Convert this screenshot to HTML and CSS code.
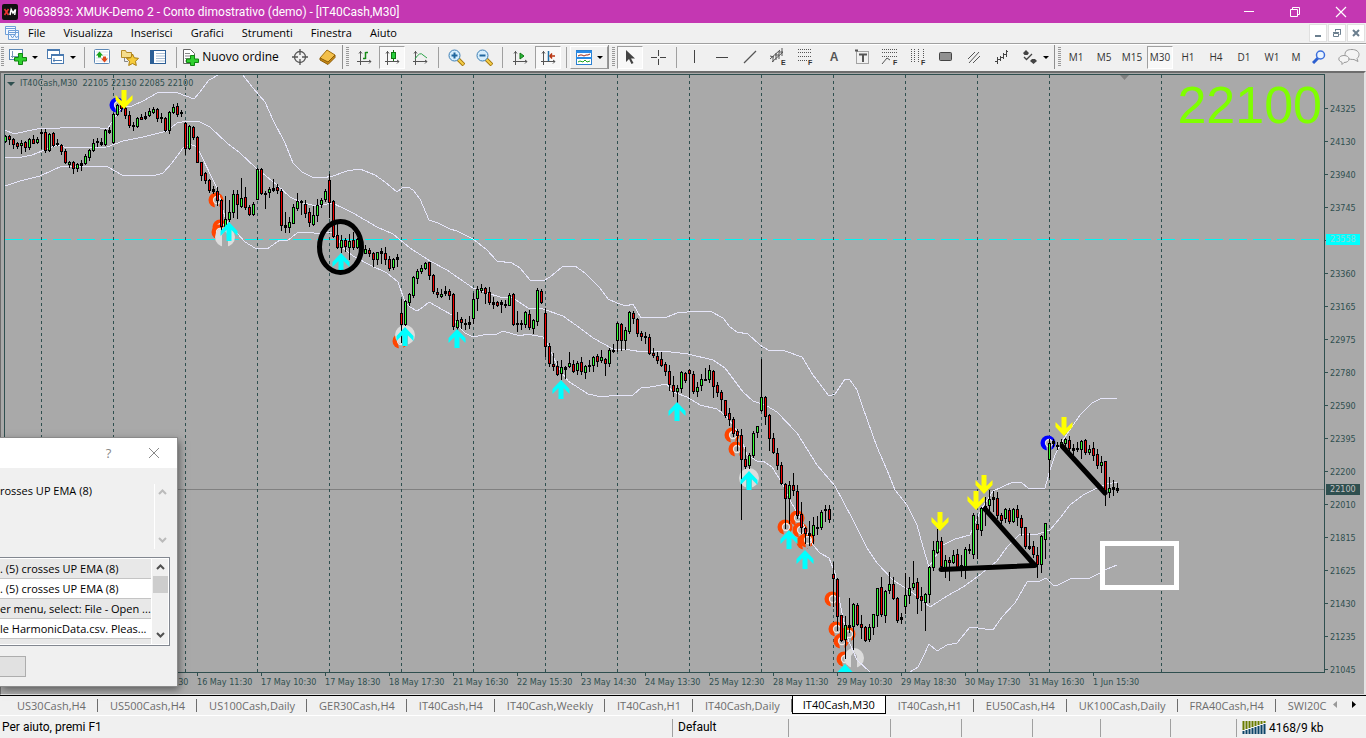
FILE: index.html
```html
<!DOCTYPE html>
<html lang="it">
<head>
<meta charset="utf-8">
<title>9063893: XMUK-Demo 2 - Conto dimostrativo (demo) - [IT40Cash,M30]</title>
<link rel="stylesheet" href="styles.css">
</head>
<body>
<header class="titlebar">
  <svg class="app-logo" width="16" height="16" viewBox="0 0 16 16"><rect width="16" height="16" rx="2" fill="#111"/><path d="M2.500 5l4 6M6.500 5l-4 6" stroke="#e33" stroke-width="1.600"/><path d="M8 11l1.200-5.500 1.800 3.500 2.500-3.500-.8 5.500" fill="none" stroke="#fff" stroke-width="1.500"/></svg>
  <h1 class="title">9063893: XMUK-Demo 2 - Conto dimostrativo (demo) - [IT40Cash,M30]</h1>
  <div class="win-controls">
    <button class="win-btn" aria-label="Riduci"><svg width="12" height="12"><path d="M1 5.500h10" stroke="#fff"/></svg></button>
    <button class="win-btn" aria-label="Ripristina"><svg width="12" height="12" fill="none" stroke="#fff"><path d="M1.500 3.500h7v7h-7zM3.500 3.500v-2h7v7h-2"/></svg></button>
    <button class="win-btn" aria-label="Chiudi"><svg width="12" height="12"><path d="M1 1l10 10M11 1L1 11" stroke="#fff" stroke-width="1.200"/></svg></button>
  </div>
</header>

<nav class="menubar">
  <svg class="menu-icon" width="14" height="14" viewBox="0 0 14 14" fill="#f4f9ff" stroke="#6f9fd8"><path d="M.5.5h10v8h-10zM.5 2.500h10M3.500 4.500h10v9h-10zM3.500 6.500h10"/><path d="M5.500 9l2 3 2-3 2 3 1-2" fill="none"/></svg>
  <button class="menu">File</button><button class="menu">Visualizza</button><button class="menu">Inserisci</button><button class="menu">Grafici</button><button class="menu">Strumenti</button><button class="menu">Finestra</button><button class="menu">Aiuto</button>
  <div class="mdi-controls">
    <button class="mdi-btn" aria-label="Riduci grafico"><svg width="10" height="10"><path d="M2 8h6" stroke="#6b7f8f" stroke-width="2"/></svg></button>
    <button class="mdi-btn" aria-label="Ripristina grafico"><svg width="10" height="10" fill="none" stroke="#6b7f8f"><path d="M1.500 5.500h5v3h-5zM1 4.500h6M3.500 3.500v-2h5v5h-1M3 1.500h6"/></svg></button>
    <button class="mdi-btn" aria-label="Chiudi grafico"><svg width="10" height="10"><path d="M2 2l6 6M8 2L2 8" stroke="#6b7f8f" stroke-width="2"/></svg></button>
  </div>
</nav>

<div class="toolbars">
  <div class="toolbar">
    <span class="grip"></span>
    <button class="tool drop" aria-label="Nuovo grafico"><svg width="18" height="16" fill="none"><rect x=".5" y=".5" width="13" height="10" fill="#fff" stroke="#5b87b5"/><path d="M3.500 2v7M2 7.500h9M9 5.500l2 2" stroke="#7898b8"/><path d="M9.500 4.500h4v4h4v3.500h-4v3.500h-4V12h-4V8.500h4z" fill="#2fd02f" stroke="#118511"/></svg><i class="caret"></i></button>
    <button class="tool drop" aria-label="Profili"><svg width="18" height="16" fill="#fff" stroke="#4a7ab0"><rect x=".5" y=".5" width="12" height="9"/><path d="M.5 1.500h12"/><rect x="4.500" y="5.500" width="12" height="9"/><path d="M4.500 6.500h12M7 9v4M6 11.500h9" fill="none"/></svg><i class="caret"></i></button>
    <span class="sep"></span>
    <button class="tool" aria-label="Market watch"><svg width="16" height="16"><rect x=".5" y=".5" width="15" height="14" rx="1" fill="#fff" stroke="#5b87b5"/><path d="M2 3h12M2 6h12M2 9h12M2 12h12" stroke="#d5dfe9"/><path d="M5.500 2.500L9 6.500H7v2H4v-2H2z" fill="#19a519"/><path d="M10.500 13.500L7 9.500h2v-2h3v2h2z" fill="#e04818"/></svg></button>
    <button class="tool" aria-label="Navigatore"><svg width="20" height="17"><path d="M1.500 1.500h4l1 2h5v5h-10z" fill="#f5dd8c" stroke="#b58b28"/><path d="M4.500 9v3.500H8" fill="none" stroke="#888"/><path d="M12.500 5l1.800 3.800 4.200.5-3 3 .8 4.200-3.800-2-3.800 2 .8-4.200-3-3 4.200-.5z" fill="#f6cc3c" stroke="#a97c10"/></svg></button>
    <button class="tool" aria-label="Terminale"><svg width="16" height="14"><rect x=".5" y=".5" width="15" height="13" fill="#fff" stroke="#2c5f96"/><rect x="1" y="1" width="3" height="12" fill="#2c5f96"/><path d="M6 3.500h9M6 6h9M6 8.500h9M6 11h9" stroke="#a8bdd3"/></svg></button>
    <span class="sep"></span>
    <button class="tool order"><svg width="17" height="17"><path d="M1.500.5h7l4 4v10h-11z" fill="#fff" stroke="#666"/><path d="M3 4.500h5M3 7h7M3 9.500h7M3 12h4" stroke="#888"/><path d="M8.500 6.500h4v3.500h4v3.500h-4v3h-4v-3h-4V10h4z" fill="#2fd02f" stroke="#118511"/></svg>Nuovo ordine</button>
    <button class="tool" aria-label="Opzioni"><svg width="16" height="16" fill="none" stroke="#555" stroke-width="1.300"><circle cx="8" cy="8" r="5.500"/><path d="M8 0v6M8 10v6M0 8h6M10 8h6"/></svg></button>
    <button class="tool" aria-label="MetaEditor"><svg width="18" height="16"><path d="M1 9L8 1l8 5-7 8z" fill="#f3c04a" stroke="#a06d0c"/><path d="M1 9l8 4 7-7v2.500L9 15.500 1 11z" fill="#c88914" stroke="#8d5d08"/></svg></button>
  </div>
  <div class="toolbar ruled">
    <span class="grip"></span>
    <button class="tool" aria-label="Barre"><svg width="15" height="15" fill="none" stroke="#555"><path d="M3.500 1v14M0 11.500h14M2 3.500l1.500-2 1.500 2M12 10l2 1.500-2 2"/><path d="M8.500 2v7M6 8.500h2.500M8.500 2.500H11" stroke="#178a17" stroke-width="1.500"/></svg></button>
    <button class="tool on" aria-label="Candele"><svg width="15" height="15" fill="none" stroke="#555"><path d="M2.500 1v14M0 11.500h14M1 3.500l1.500-2 1.500 2M12 10l2 1.500-2 2"/><path d="M8.500 0v11" stroke="#117711"/><rect x="6.500" y="2.500" width="4" height="6" fill="#27cf3c" stroke="#117711"/></svg></button>
    <button class="tool" aria-label="Linea"><svg width="15" height="15" fill="none" stroke="#555"><path d="M2.500 1v14M0 11.500h14M1 3.500l1.500-2 1.500 2M12 10l2 1.500-2 2"/><path d="M2 9q5-8 8-4l4 3" stroke="#2ca44a"/></svg></button>
    <span class="sep"></span>
    <button class="tool" aria-label="Ingrandisci"><svg width="17" height="17"><path d="M10 10l6 6" stroke="#a57910" stroke-width="4"/><path d="M10 10l5.500 5.500" stroke="#f6cf4a" stroke-width="2"/><circle cx="6.500" cy="6.500" r="5.500" fill="#d7eefc" stroke="#3d7fb5"/><path d="M3.500 6.500h6M6.500 3.500v6" stroke="#20679e" stroke-width="2"/></svg></button>
    <button class="tool" aria-label="Riduci zoom"><svg width="17" height="17"><path d="M10 10l6 6" stroke="#a57910" stroke-width="4"/><path d="M10 10l5.500 5.500" stroke="#f6cf4a" stroke-width="2"/><circle cx="6.500" cy="6.500" r="5.500" fill="#d7eefc" stroke="#3d7fb5"/><path d="M3.500 6.500h6" stroke="#20679e" stroke-width="2"/></svg></button>
    <span class="sep"></span>
    <button class="tool" aria-label="Scorrimento"><svg width="15" height="15" fill="none" stroke="#555"><path d="M2.500 1v14M0 11.500h14M1 3.500l1.500-2 1.500 2M12 10l2 1.500-2 2"/><path d="M7 3l4 3-4 3z" fill="#27b83c" stroke="#117711"/></svg></button>
    <button class="tool on" aria-label="Spostamento"><svg width="15" height="15" fill="none" stroke="#555"><path d="M2.500 1v14M0 11.500h14M1 3.500l1.500-2 1.500 2M12 10l2 1.500-2 2"/><path d="M7.500 1v10" stroke="#1f6fa8" stroke-width="1.500"/><path d="M14 6H9m2-2.500L9 6l2 2.500" stroke="#b8330f" stroke-width="1.500"/></svg></button>
    <span class="sep"></span>
    <button class="tool drop raised" aria-label="Modelli"><svg width="16" height="15"><rect x=".5" y=".5" width="15" height="14" fill="#fff" stroke="#2a7fd0"/><path d="M0 2h16M0 8h16" stroke="#2a8be6" stroke-width="2"/><path d="M2 6l2-1h2l2 1 2-1h2l2-1" fill="none" stroke="#9c2a18"/><path d="M2 12l2-1 3 1 2-2 2 2 3-1" fill="none" stroke="#22a722"/></svg><i class="caret"></i></button>
  </div>
  <div class="toolbar ruled">
    <span class="grip"></span>
    <button class="tool on" aria-label="Cursore"><svg width="12" height="16"><path d="M2 1v12l3-3 2.500 5 2-1L7 9.500h4z" fill="#444"/></svg></button>
    <button class="tool" aria-label="Mirino"><svg width="16" height="16"><path d="M8.500 1v6M8.500 10v6M1 8.500h6M10 8.500h6" stroke="#444"/></svg></button>
    <span class="sep"></span>
    <button class="tool" aria-label="Linea verticale"><svg width="16" height="16"><path d="M8.500 1v13" stroke="#444"/></svg></button>
    <button class="tool" aria-label="Linea orizzontale"><svg width="16" height="16"><path d="M2 8.500h12" stroke="#444"/></svg></button>
    <button class="tool" aria-label="Trendline"><svg width="16" height="16"><path d="M2 14L14 2" stroke="#555" stroke-width="1.200"/></svg></button>
    <button class="tool" aria-label="Canale equidistante"><svg width="18" height="18" fill="none" stroke="#555"><path d="M1 11L11 2M3 14l11-10M4 8v6M7 5v7M10 3v8M13 0v8M1 8l4 1M6 7l4 0M10 4l4 0"/><text class="glyph" x="12" y="17">E</text></svg></button>
    <button class="tool" aria-label="Fibonacci"><svg width="18" height="18"><path d="M1 1.500h14M1 4.500h14M1 8.500h14M1 12.500h9" stroke="#555" stroke-dasharray="1 1"/><text class="glyph" x="11" y="17">F</text></svg></button>
    <button class="tool letter" aria-label="Testo">A</button>
    <button class="tool" aria-label="Etichetta"><svg width="15" height="16" fill="none" stroke="#555"><path d="M1.500 2.500h12v12h-12z" stroke-dasharray="1 1"/><path d="M0 1.500h3M4 5.500h8M8 5v8" stroke-width="2"/></svg></button>
    <button class="tool" aria-label="Ventaglio"><svg width="18" height="18" fill="none" stroke="#555"><path d="M1 1.500h15M1 4.500h15M1 8.500h15" stroke-dasharray="1 1"/><path d="M1 16l5-6 3 2"/><text class="glyph" x="12" y="17">F</text></svg></button>
    <button class="tool" aria-label="Zone temporali"><svg width="18" height="18"><path d="M2.500 1v14M5.500 1v14M9.500 1v14M14.500 1v9" stroke="#555" stroke-dasharray="1 1"/><text class="glyph" x="12" y="17">F</text></svg></button>
    <button class="tool" aria-label="Rettangolo"><svg width="14" height="10"><rect x=".5" y=".5" width="12" height="8" rx="1" fill="#909090" stroke="#444"/></svg></button>
    <button class="tool" aria-label="Canale"><svg width="16" height="16"><path d="M2 10L9 3M3 14L13 3M7 14l7-7" stroke="#555"/></svg></button>
    <button class="tool" aria-label="Deviazione"><svg width="16" height="16" fill="none" stroke="#444"><path d="M3.500 8v7M6.500 7v5M9.500 4v6M12.500 1v7M1 12.500h2M3 10.500h4M6 8.500h4M9 5.500h4M12 2.500h2"/></svg></button>
    <button class="tool drop" aria-label="Frecce"><svg width="16" height="16" fill="#444"><path d="M4 1l3 3-1.500 2h-3L1 4zM8 12l2-2h3l2 2-3.500 3z"/><path d="M2 8l2.500 2.500L10 5" fill="none" stroke="#444" stroke-width="1.300"/></svg><i class="caret"></i></button>
  </div>
  <div class="toolbar ruled last">
    <span class="grip"></span>
    <button class="tool tf">M1</button><button class="tool tf">M5</button><button class="tool tf">M15</button><button class="tool tf on">M30</button><button class="tool tf">H1</button><button class="tool tf">H4</button><button class="tool tf">D1</button><button class="tool tf">W1</button><button class="tool tf cut">M</button>
    <button class="tool find" aria-label="Cerca"><svg width="14" height="14"><path d="M6 8l-5 5" stroke="#2c5fd0" stroke-width="3"/><circle cx="8.500" cy="5" r="4" fill="#eaf4ff" stroke="#3c6fdc" stroke-width="1.500"/></svg></button>
    <button class="tool chat" aria-label="Chat"><svg width="22" height="16" fill="#f4f4f4" stroke="#999"><path d="M14 .5c4 0 7 2 7 5 0 2-1 3-2 4l1 3-4-2c-5 0-9-1-9-5s3-5 7-5z"/><path d="M6 6.500c3 0 5 1.500 5 3.500s-2 3.500-5 3.500l-2 2v-2.200C2 12.500.8 11.500.8 10 .8 8 3 6.500 6 6.500z"/></svg></button>
  </div>
</div>

<main class="workspace">
  <section class="chart" aria-label="IT40Cash,M30">
    <div class="plot">
      <svg class="canvas" id="plot" role="img" aria-label="Grafico a candele IT40Cash M30"></svg>
      <p class="ohlc"><i class="caret wide"></i>IT40Cash,M30&nbsp; 22105 22130 22085 22100</p>
      <p class="last-price">22100</p>
    </div>
    <div class="prices">
      <span>24325</span><span>24130</span><span>23940</span><span>23745</span><span>23550</span><span>23360</span><span>23165</span><span>22975</span><span>22780</span><span>22590</span><span>22395</span><span>22200</span><span>22010</span><span>21815</span><span>21625</span><span>21430</span><span>21235</span><span>21045</span>
      <b class="tag level">23558</b>
      <b class="tag bid">22100</b>
    </div>
    <div class="times">
      <span>13 May 14:30</span><span>14 May 13:30</span><span>15 May 12:30</span><span>16 May 11:30</span><span>17 May 10:30</span><span>17 May 18:30</span><span>18 May 17:30</span><span>21 May 16:30</span><span>22 May 15:30</span><span>23 May 14:30</span><span>24 May 13:30</span><span>25 May 12:30</span><span>28 May 11:30</span><span>29 May 10:30</span><span>29 May 18:30</span><span>30 May 17:30</span><span>31 May 16:30</span><span>1 Jun 15:30</span>
    </div>
  </section>

  <section class="dialog" role="dialog" aria-label="Avviso">
    <div class="dialog-head">
      <button class="dialog-btn" aria-label="Guida">?</button>
      <button class="dialog-btn" aria-label="Chiudi avviso"><svg width="12" height="12"><path d="M1 1l10 10M11 1L1 11" stroke="#888"/></svg></button>
    </div>
    <div class="message">
      <p>rosses UP EMA (8)</p>
      <div class="scroll pale"><svg width="9" height="7"><path d="M1 5l3.500-3.500L8 5" /></svg><svg width="9" height="7"><path d="M1 1l3.500 3.500L8 1"/></svg></div>
    </div>
    <div class="alerts">
      <ul class="rows">
        <li>. (5) crosses UP EMA (8)</li><li>. (5) crosses UP EMA (8)</li><li>er menu, select: File - Open ...</li><li>le HarmonicData.csv. Pleas...</li>
      </ul>
      <div class="scroll"><svg width="9" height="7"><path d="M1 5l3.500-3.500L8 5"/></svg><i class="thumb"></i><svg class="down" width="9" height="7"><path d="M1 1l3.500 3.500L8 1"/></svg></div>
    </div>
    <button class="ok" aria-label="OK"></button>
  </section>
</main>

<nav class="tabs">
  <button class="tab">US30Cash,H4</button><button class="tab">US500Cash,H4</button><button class="tab">US100Cash,Daily</button><button class="tab">GER30Cash,H4</button><button class="tab">IT40Cash,H4</button><button class="tab">IT40Cash,Weekly</button><button class="tab">IT40Cash,H1</button><button class="tab">IT40Cash,Daily</button><button class="tab active">IT40Cash,M30</button><button class="tab">IT40Cash,H1</button><button class="tab">EU50Cash,H4</button><button class="tab">UK100Cash,Daily</button><button class="tab">FRA40Cash,H4</button><button class="tab cutoff">SWI20C</button>
  <div class="tab-arrows"><button aria-label="Precedente"><svg width="5" height="8"><path d="M4 0v7L0 3.500z" fill="#999"/></svg></button><button aria-label="Successivo"><svg width="5" height="8"><path d="M0 0v7l4-3.500z" fill="#000"/></svg></button></div>
</nav>

<footer class="status">
  <span>Per aiuto, premi F1</span><span>Default</span><span></span><span></span><span></span><span></span><span></span><span></span>
  <span class="traffic"><svg width="24" height="14"><path d="M1.500 0v9M4.500 0v8M7.500 0v7M10.500 0v6M13.500 0v5M16.500 0v4M19.500 0v3M22.500 0v2" stroke="#6b7d00" stroke-width="2"/><path d="M1.500 13v-3M4.500 13V9M7.500 13V8M10.500 13V7M13.500 13V6M16.500 13V5M19.500 13V4M22.500 13V3" stroke="#0c4468" stroke-width="2"/></svg>4168/9 kb</span>
</footer>
<script src="chart.js"></script>
</body>
</html>
```

FILE: styles.css
```css
* { box-sizing: border-box; }
html, body { height: 100%; }
body {
  margin: 0;
  display: flex;
  flex-direction: column;
  overflow: hidden;
  background: #f0f0f0;
  color: #000;
  font: 12px/16px Roboto, "Noto Sans", sans-serif;
}
button { margin: 0; padding: 0; border: 0; background: none; color: inherit; font: inherit; }
svg { display: block; flex: none; }
p, h1, ul { margin: 0; padding: 0; }
ul { list-style: none; }

.titlebar { display: flex; align-items: center; height: 23px; padding: 0 2px; background: #c437b2; color: #fff; }
.title { flex: 1; margin-left: 5px; font-size: 12px; font-weight: 400; white-space: nowrap; }
.win-controls { display: flex; height: 100%; }
.win-btn { width: 46px; display: grid; place-items: center; }

.menubar { display: flex; align-items: center; height: 21px; padding: 0 1px 0 5px; border-bottom: 1px solid #a0a0a0; font: 11px/16px "Open Sans", "Noto Sans", sans-serif; }
.menu { padding: 0 9px; }
.mdi-controls { display: flex; gap: 1px; margin-left: auto; }
.mdi-btn { width: 18px; height: 18px; display: grid; place-items: center; background: #fff; border: 1px solid #e0e0e0; }

.toolbars { display: flex; height: 27px; padding-bottom: 2px; border-top: 1px solid #fff; }
.toolbar { display: flex; align-items: center; flex: none; }
.ruled { border-left: 1px solid #8f8f8f; }
.last { flex: 1; }
.grip { width: 4px; height: 20px; background: repeating-linear-gradient(#999 0 1px, #f0f0f0 1px 2px) 1px 0 / 3px 100% no-repeat; }
.ruled .grip { width: 7px; background-position: 3px 0; }
.sep { width: 8px; height: 21px; background: linear-gradient(#a0a0a0, #a0a0a0) 4px 0 / 1px 100% no-repeat; }
.tool { width: 28px; height: 23px; display: flex; align-items: center; justify-content: center; flex: none; }
.tool.drop { width: 38px; gap: 5px; }
.tool.order { width: 106px; gap: 3px; padding-right: 5px; font-family: "Open Sans", "Noto Sans", sans-serif; }
.tool.on { width: 26px; margin: 0 1px; border: 1px solid #a0a0a0; border-right-color: #fff; border-bottom-color: #fff; background: #f8f8f8; }
.raised { border: 1px solid #fff; border-right-color: #999; border-bottom-color: #999; }
.tool.letter { font: bold 12px/16px "Liberation Sans", sans-serif; color: #555; }
.tool.tf { font: 10px/16px "Open Sans", "Noto Sans", sans-serif; color: #333; }
.tool.cut { width: 20px; }
.tool.find { width: 26px; }
.tool.chat { width: 34px; margin-left: auto; }
.glyph { font: bold 7px "Liberation Sans", sans-serif; fill: #333; stroke: none; }
.caret { width: 0; border: 3px solid transparent; border-top-color: #000; border-bottom: 0; }
.caret.wide { display: inline-block; border-width: 4px 4px 0; border-top-color: #2f4f4f; margin-right: 5px; }

.workspace { position: relative; flex: 1; min-height: 0; display: flex; border-top: 2px solid #6d6d6d; border-right: 2px solid #e3e3e3; }
.chart {
  flex: 1;
  min-width: 0;
  display: grid;
  grid-template: minmax(0, 1fr) 21px / minmax(0, 1fr) 39px;
  padding: 1px 0 0 3px;
  border-left: 1px solid #6d6d6d;
  border-bottom: 1px solid #e3e3e3;
  background: #a9a9a9;
  color: #2f4f4f;
  font: 9px/12px "DejaVu Sans Condensed", "Noto Sans", sans-serif;
}
.plot { position: relative; overflow: hidden; border: 1px solid #2f4f4f; }
.canvas { width: 100%; height: 100%; }
.ohlc { position: absolute; left: 2px; top: 2px; white-space: nowrap; }
.last-price { position: absolute; right: 2px; top: 0; color: #7fff00; font: 52px/60px "Liberation Sans", sans-serif; }
.prices { position: relative; padding-top: 18px; overflow: hidden; }
.prices span { display: flex; align-items: center; height: 33px; }
.prices span::before { content: ""; width: 3px; height: 1px; margin-right: 2px; background: #2f4f4f; }
.tag { position: absolute; left: 1px; width: 34px; height: 11px; padding-left: 4px; font-weight: 400; line-height: 11px; }
.level { top: 160px; background: #0ff; color: #8fd8d8; }
.bid { top: 410px; background: #2f4f4f; color: #c0c0c0; }
.times { grid-column: 1 / -1; display: flex; overflow: hidden; }
.times span { flex: none; width: 64px; white-space: nowrap; }
.times span::before { content: ""; display: block; width: 1px; height: 3px; background: #2f4f4f; }
.times span:first-child { margin-left: 1px; }

.dialog {
  position: absolute;
  left: 0;
  bottom: 9px;
  width: 177px;
  height: 248px;
  background: #f0f0f0;
  box-shadow: 0 0 0 1px #8a8a8a, 2px 3px 8px rgba(0, 0, 0, .5);
  font: 11px/20px "Open Sans", "Noto Sans", sans-serif;
}
.dialog-head { display: flex; justify-content: flex-end; height: 30px; padding-right: 1px; background: #fff; }
.dialog-btn { width: 45px; display: grid; place-items: center; color: #888; font-size: 13px; }
.message { display: flex; justify-content: space-between; height: 65px; margin: 16px 7px 8px 0; white-space: nowrap; }
.message p { margin-top: -3px; }
.scroll { position: relative; width: 16px; display: flex; flex-direction: column; justify-content: space-between; align-items: center; padding: 5px 0; }
.scroll path { fill: none; stroke: #505050; stroke-width: 2; }
.pale { border-left: 1px solid #fff; }
.pale path { stroke: #bbb; }
.alerts { display: flex; height: 89px; margin-right: 7px; padding: 1px 1px 1px 0; overflow: hidden; background: #fff; border: 1px solid #828790; border-left: 0; }
.rows { flex: 1; min-width: 0; overflow: hidden; background: #e8e8e8; white-space: nowrap; }
.rows li { height: 20px; line-height: 20px; border-bottom: 1px solid #c4c4c4; }
.rows li:nth-child(odd) { background: #e8e8e8; }
.rows li:nth-child(even) { background: #fff; }
.alerts .scroll { margin-left: 1px; background: #f0f0f0; justify-content: flex-start; gap: 5px; }
.thumb { width: 15px; height: 17px; background: #cdcdcd; }
.scroll .down { margin-top: auto; }
.ok { display: block; width: 26px; height: 21px; margin-top: 10px; background: #e1e1e1; border: 1px solid #adadad; border-left: 0; }

.tabs { position: relative; display: flex; height: 21px; padding-left: 5px; border-top: 1px solid #000; border-bottom: 1px solid #fff; overflow: hidden; color: #6d6d6d; font: 11px/16px "Open Sans", "Noto Sans", sans-serif; white-space: nowrap; }
.tab { position: relative; flex: none; height: 18px; padding: 0 12px; line-height: 17px; }
.tab:not(.active)::after { content: ""; position: absolute; right: 0; top: 3px; width: 1px; height: 13px; background: #6d6d6d; }
.tab.active { background: #fff; color: #000; border: solid #000; border-width: 0 1px 1px; padding: 0 10px; }
.tab.cutoff { padding-right: 0; }
.tab.cutoff::after { display: none; }
.tab-arrows { position: absolute; right: 0; top: 0; display: flex; align-items: center; gap: 14px; height: 18px; padding: 0 9px 0 1px; background: #f0f0f0; }

.status { display: grid; grid-template-columns: minmax(0, 1fr) 116px 102px 71px 71px 68px 70px 66px 130px; height: 22px; padding: 3px 0 1px; white-space: nowrap; }
.status span { padding-left: 5px; border-left: 1px solid #a0a0a0; line-height: 17px; }
.status span:first-child { padding-left: 2px; border-left: 0; }
.status .traffic { display: flex; align-items: center; gap: 3px; }
```

FILE: chart.js
```js
// One entry per bar, 4px apart: high, body top, body bottom, low, kind (g = up, r = down, k = doji).
const bars = `
135,136,141,142,g 135,136,139,144,r 138,139,144,148,r 142,143,146,148,r 140,143,145,153,g 141,142,147,151,r
138,139,147,149,g 135,139,143,143,r 137,139,142,143,g 129,132,133,148,k 129,132,150,152,r 133,134,150,151,g
132,133,145,146,r 139,143,144,145,k 144,145,151,154,r 149,151,162,163,r 161,162,164,167,g 161,162,168,173,r
163,164,168,171,g 160,163,165,170,k 154,156,163,164,g 149,150,157,160,g 139,143,150,151,g 138,141,142,146,k
138,142,144,145,k 129,130,144,145,g 127,130,132,133,k 113,114,142,143,g 104,105,114,115,g 104,105,108,111,r
107,108,115,118,r 111,115,125,127,r 122,125,126,130,k 117,118,126,127,g 114,117,119,119,r 112,116,118,119,k
108,111,115,116,g 107,109,112,113,g 108,109,118,121,r 113,117,118,122,k 117,118,130,131,r 111,112,130,133,g
104,107,112,113,g 103,106,114,116,r 110,112,113,116,k 122,123,148,154,r 125,126,148,149,g 126,127,137,139,r
136,137,162,162,r 162,162,175,180,r 172,173,180,183,r 179,180,190,192,r 186,189,191,193,k 187,191,200,205,r
199,200,226,233,r 196,219,226,227,g 200,212,219,221,g 190,194,212,217,g 190,194,204,218,r 178,198,206,207,g
187,197,207,209,r 205,207,214,215,r 202,204,214,215,g 168,169,199,199,g 168,169,193,194,r 191,193,194,208,k
187,189,192,197,g 179,188,190,191,k 184,187,190,193,r 189,191,225,230,r 212,225,227,232,k 217,222,227,232,g
204,207,223,223,g 193,201,208,210,g 200,201,202,214,k 200,204,213,217,r 208,212,222,226,r 206,215,224,225,g
199,205,215,221,g 198,200,204,207,g 189,191,199,201,g 174,180,202,217,r 200,201,236,237,r 223,235,247,248,r
235,240,247,252,g 238,240,246,251,r 234,241,247,259,g 232,240,247,249,r 238,239,247,248,g 240,243,245,250,k
245,249,253,253,g 248,250,253,256,r 252,253,259,266,r 252,252,259,264,g 248,251,253,263,k 247,253,259,264,r
256,259,268,270,r 258,259,267,269,g 254,257,259,266,k 299,313,324,342,r 300,301,324,325,g 293,294,302,305,g
276,277,295,297,g 269,271,278,283,g 265,268,271,273,g 262,263,268,269,g 262,262,275,279,r 274,275,291,293,r
288,292,294,297,r 289,294,296,297,g 286,291,293,295,k 289,291,295,299,r 293,294,326,329,r 312,320,327,329,g
317,319,322,328,r 319,323,324,329,k 316,322,324,328,k 293,299,318,323,g 286,289,298,310,g 284,288,290,292,g
287,288,293,303,r 287,292,302,304,r 297,302,304,308,k 301,302,305,306,r 300,302,304,312,k 300,304,305,307,k
293,295,305,305,g 293,294,324,325,r 311,323,324,331,k 320,323,324,329,k 311,312,324,327,g 310,314,327,329,r
319,320,328,333,g 288,290,321,325,g 289,291,302,303,r 308,313,346,356,r 343,346,363,366,r 353,364,366,370,r
361,366,374,375,r 360,367,373,379,g 366,367,369,378,k 352,363,366,367,g 360,364,371,372,r 361,363,370,374,g
357,362,371,374,r 365,366,372,378,g 360,365,366,371,k 356,357,365,371,g 354,356,361,366,r 350,357,360,362,g
358,359,363,375,r 348,350,363,366,g 344,350,351,352,k 322,323,340,351,g 323,324,340,350,r 327,330,340,349,g
311,312,331,333,g 311,313,318,323,r 318,319,333,336,r 331,333,336,340,r 332,336,337,343,k 334,337,353,354,r
348,353,355,357,r 352,356,360,363,r 352,359,365,366,r 362,364,371,375,r 365,371,384,390,r 376,385,391,396,r
385,388,391,402,g 371,372,388,392,g 372,373,380,382,r 369,370,373,397,r 371,374,391,393,r 382,387,391,396,g
374,379,385,390,g 368,379,380,380,k 365,370,379,382,g 370,371,386,397,r 382,385,392,396,r 390,392,399,410,r
400,400,415,417,r 408,413,419,425,r 417,419,433,436,r 429,431,435,450,r 429,435,459,519,r 447,459,466,468,r
453,455,465,468,g 431,433,455,457,g 426,426,432,437,g 359,397,410,411,g 396,397,416,424,r 414,415,438,450,r
433,438,452,453,r 448,453,465,469,r 462,465,483,484,r 483,484,498,528,r 481,485,498,523,g 473,485,490,495,r
485,491,515,518,r 502,514,527,533,r 527,528,533,543,r 521,533,535,545,k 517,525,535,543,g 516,527,528,534,k
510,512,527,529,g 505,509,510,521,k 505,509,519,522,r 562,574,578,606,r 578,579,616,630,r 615,615,640,641,r
616,625,639,658,g 598,625,627,632,k 603,604,626,649,g 603,605,624,625,r 615,624,627,638,r 626,627,640,641,r
624,627,639,641,g 614,614,627,634,g 588,588,615,626,g 577,587,614,616,r 590,591,615,622,g 572,584,590,593,g
577,584,598,599,r 597,598,620,622,r 613,617,619,623,k 573,595,606,613,g 577,588,595,603,g 561,583,587,589,g
578,582,598,613,r 587,596,600,610,r 593,594,602,630,g 566,567,594,602,g 541,550,567,570,g 529,541,552,553,g
537,541,566,567,r 555,560,567,577,g 557,560,562,580,r 550,555,562,563,g 549,554,567,567,r 555,565,567,576,k
547,549,567,578,g 544,549,550,553,k 513,515,554,558,g 516,524,529,558,r 507,508,530,535,g 497,506,510,525,g
490,499,505,510,g 491,497,499,511,k 492,498,515,518,r 513,515,520,523,r 508,509,518,522,g 508,510,521,523,r
508,509,521,522,g 505,509,517,525,r 515,518,527,535,r 527,527,546,548,r 533,546,548,549,k 541,546,554,557,r
547,555,564,577,r 535,536,564,572,g 523,523,539,558,g 439,443,459,477,g 439,441,443,446,k 442,445,446,449,k
439,442,446,448,g 438,439,443,448,g 436,440,448,450,r 444,448,450,454,k 442,448,449,451,k 440,441,449,458,g
439,440,452,454,r 445,449,452,454,g 442,448,455,460,r 449,454,465,468,r 456,462,465,472,g 461,461,492,505,r
477,488,492,497,g 480,487,489,495,k 483,488,490,492,k`;

const bands = [
  '5,130 14,134 27,131 42,128 60,128 80,127 100,128 108,128 115,117 122,107 132,106 143,101 157,93 167,92 178,93 194,99 200,92 209,80 220,74 231,70 242,74 253,88 265,102 273,120 285,143 293,163 302,172 312,177 322,178 333,176 347,171 360,169 375,175 385,182 397,192 402,188 408,187 413,190 420,199 429,220 438,223 450,229 457,231 473,239 487,250 497,261 512,263 520,268 530,280 543,281 550,277 562,267 575,266 585,273 600,288 608,299 617,303 626,306 633,304 641,318 648,317 667,317 677,313 697,311 710,311 723,318 730,327 737,332 748,334 760,345 768,350 785,351 802,357 813,375 829,396 835,394 845,379 850,380 857,390 862,405 877,447 887,470 895,490 907,505 917,525 923,547 929,567 935,557 943,545 955,539 970,535 975,523 982,508 993,491 1013,482 1022,483 1028,488 1045,488 1050,470 1055,455 1063,440 1080,415 1092,403 1102,398 1117,398',
  '5,157 17,158 32,155 47,149 57,145 68,148 107,147 123,141 143,137 167,131 177,123 187,121 200,122 210,127 227,143 240,153 255,167 277,185 290,197 303,203 317,206 332,203 343,208 353,213 377,227 393,234 410,248 430,261 447,270 460,279 473,288 487,293 500,297 513,298 528,308 543,309 563,316 580,328 593,338 613,349 630,350 643,352 663,351 688,354 713,360 725,368 743,392 753,401 767,406 777,412 797,433 817,465 835,486 853,520 867,548 877,563 893,580 913,593 930,607 947,596 963,587 977,577 997,561 1007,547 1020,534 1038,534 1050,530 1060,518 1070,505 1083,495 1095,489 1107,484 1117,482',
  '5,186 20,181 40,176 62,166 80,167 87,166 108,167 122,175 153,176 163,173 172,163 183,148 190,144 197,147 217,188 225,217 230,228 237,233 245,242 255,248 267,249 280,240 287,241 297,233 307,232 320,234 330,232 337,236 342,247 353,256 370,265 387,273 398,282 405,302 410,307 417,311 423,307 429,302 443,310 452,315 457,325 465,333 473,337 483,335 497,334 503,331 520,336 527,334 543,337 548,345 558,367 568,381 588,394 602,397 617,395 633,395 641,388 650,387 667,384 673,392 687,397 700,405 717,409 727,417 740,435 747,455 757,461 763,461 772,467 782,483 790,500 800,518 813,545 820,553 829,558 835,573 840,603 847,637 857,660 870,672 890,676 910,672 918,667 923,657 929,644 937,651 947,645 957,643 970,627 993,630 1002,617 1015,603 1027,582 1040,581 1046,578 1053,585 1058,585 1070,579 1078,578 1090,578 1100,573 1107,569 1117,565'
];

const sessions = [41, 113, 185, 257, 329, 401, 473, 545, 617, 689, 761, 833, 905, 977, 1049, 1161];
const orange = [[216, 200], [220, 227], [219, 232], [400, 341], [732, 435], [736, 449], [785, 527], [797, 518], [800, 530], [804, 542], [807, 540], [832, 599], [836, 629], [841, 641], [848, 634], [844, 659]];
const silver = [[225, 237], [405, 335], [749, 478], [854, 658]];
const blue = [[117, 105], [1048, 443]];
const upArrows = [[229, 222], [341, 253], [405, 327], [457, 329], [561, 380], [677, 402], [749, 471], [789, 530], [805, 550], [845, 664]];
const downArrows = [[124, 109], [940, 531], [976, 510], [984, 494], [1064, 436]];

let art = '';
const line = (x1, y1, x2, y2, attrs) => { art += `<path d="M${x1} ${y1}L${x2} ${y2}" ${attrs}/>`; };

line(5, 239.5, 1324, 239.5, 'stroke="#00f5f5" stroke-dasharray="18 6"');
line(5, 489.5, 1324, 489.5, 'stroke="#808080"');
sessions.forEach(x => line(x + 0.5, 75, x + 0.5, 672, 'stroke="#2f4f4f" stroke-dasharray="3 3"'));
art += '<path d="M1120 75h9l-4.500 5z" fill="#808080"/>';

const ring = ([x, y], color) => {
  art += `<circle cx="${x}" cy="${y}" r="7.500" fill="${color}"/><path d="M${x - 1} ${y + 8}l-1-6h6l-1 6z" fill="#a9a9a9"/><circle cx="${x + 1}" cy="${y}" r="3.500" fill="#a9a9a9" stroke="#eee4e0" stroke-width="1.300"/>`;
};
orange.forEach(p => ring(p, '#ff4500'));
blue.forEach(p => ring(p, '#00f'));
silver.forEach(([x, y]) => { art += `<circle cx="${x}" cy="${y}" r="10" fill="#dcdcdc"/><path d="M${x - 3} ${y + 10}V${y - 2}l3-4 3 4v12z" fill="#a9a9a9"/>`; });

bands.forEach(points => { art += `<polyline points="${points}" fill="none" stroke="#e6e6fa" shape-rendering="crispEdges"/>`; });

bars.trim().split(/\s+/).forEach((bar, i) => {
  const [high, top, bottom, low, kind] = bar.split(',');
  const x = 5 + i * 4;
  const height = bottom - top + 1;
  art += `<rect x="${x}" y="${high}" width="1" height="${low - high + 1}"/><rect x="${x - 1}" y="${top}" width="3" height="${height}"/>`;
  if (kind !== 'k' && height > 2) {
    art += `<rect x="${x}" y="${+top + 1}" width="1" height="${height - 2}" fill="${kind === 'g' ? '#32ff32' : '#f00000'}"/>`;
  }
});

const head = 'l8.500 9v5l-6-6v11h-5v-11l-6 6v-5z';
upArrows.forEach(([x, y]) => { art += `<path transform="translate(${x} ${y})" d="M0 0${head}" fill="#0ff"/>`; });
downArrows.forEach(([x, y]) => { art += `<path transform="translate(${x} ${y}) scale(1 -1)" d="M0 0${head}" fill="#ff0"/>`; });

art += '<ellipse cx="340.500" cy="247" rx="21" ry="25.500" fill="none" stroke="#000" stroke-width="5"/>';
art += '<path d="M941 569.500L1035 565.500L985 509M1062 446L1105 493" fill="none" stroke="#000" stroke-width="5" stroke-linecap="round" stroke-linejoin="round"/>';
art += '<rect x="1102.500" y="543.500" width="74" height="44" fill="none" stroke="#fff" stroke-width="5"/>';

document.getElementById('plot').innerHTML = `<g transform="translate(-5 -75)">${art}</g>`;
```
